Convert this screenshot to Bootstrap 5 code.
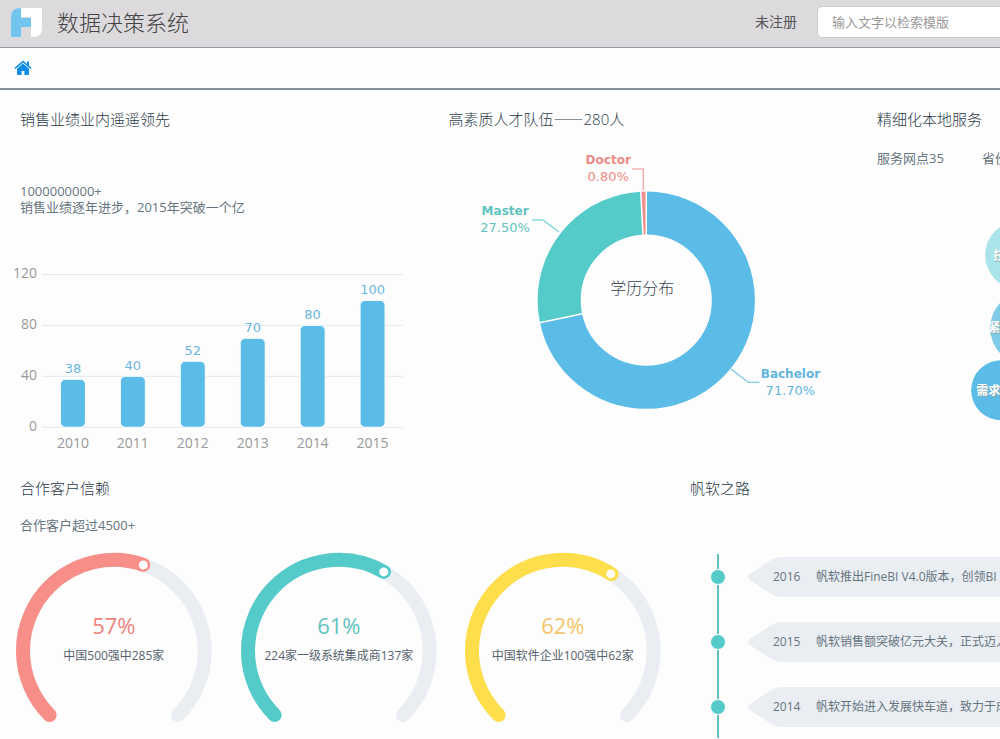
<!DOCTYPE html>
<html lang="zh-CN">
<head>
<meta charset="utf-8">
<meta name="viewport" content="width=device-width, initial-scale=1">
<title>数据决策系统</title>
<link href="https://cdn.jsdelivr.net/npm/bootstrap@5.3.0/dist/css/bootstrap.min.css" rel="stylesheet">
<style>
:root{--blue:#5bbce7;--teal:#55cbc9;--coral:#f78e87;--yellow:#fede4b;--track:#eaedf2;--ink:#3f4f5c;--soft:#66757f}
body{font-family:"Open Sans","Noto Sans CJK SC",sans-serif;background:#fdfdfd;color:var(--ink);overflow-x:hidden;font-size:13px;line-height:20px}
.topbar{height:48px;background:#dcdadd;border-bottom:1px solid #9b999d;overflow:hidden;padding-bottom:3px}
.brand-area{flex:0 0 75.5%;padding-left:10px;gap:14px}
.app-title{font-size:22px;line-height:30px;color:#444;font-weight:300}
.user-state{font-size:14px;color:#555}
.search-box{flex:0 0 220px;height:32px;margin-left:20px;font-size:13px;padding:0 14px;border-color:#cfcdd0;border-radius:5px}
.search-box::placeholder{color:#999}
.tabs-strip{height:42px;padding-left:14px;border-bottom:2px solid #858f97}
.board{overflow:hidden}
.row-top{display:grid;grid-template-columns:repeat(3,42.85%)}
.row-bottom{display:grid;grid-template-columns:67% 62%}
.panel-title{font-size:15px;line-height:22px;font-weight:300;color:#2c3b48;margin:0;padding:18px 0 0 20px}
.cjk-dash{font-family:"Noto Sans CJK SC",sans-serif}
.note{padding-left:20px;color:var(--soft)}
.sales-note{line-height:16px;margin-top:53px}
svg{display:block}
.axis{font-size:14px;fill:#999}
.val{font-family:"DejaVu Sans",sans-serif;font-size:13px}
.slice-name{font-family:"DejaVu Sans",sans-serif;font-size:12px;font-weight:700}
.gauges{display:grid;grid-template-columns:repeat(3,1fr);margin-right:-4px}
.pct{font-size:22px}
.caption-text{font-size:12px;fill:#55636e}
.services{gap:38px;margin-top:18px}
.bubble-text{font-size:12px;font-weight:700;fill:#fff;text-shadow:1px 1px 1px #8aa}
.timeline{position:relative;margin:55px 0 0 41px;padding:3px 0 11px;gap:25px}
.timeline::before{content:"";position:absolute;left:6px;top:0;bottom:0;width:2px;background:#62c0c2}
.stop{height:40px;font-size:12px;color:var(--soft);white-space:nowrap}
.dot{position:relative;width:16px;height:16px;margin-left:-1px;border-radius:50%;background:var(--teal);border:1px solid #fdfdfd;flex:none}
.tag-tip{width:36px;height:40px;margin-left:21px;flex:none}
.tag-body{height:40px;background:var(--track);flex:1 0 auto;margin-left:-1px}
.tag-body time{width:43px;margin-left:-9px}
</style>
</head>
<body>
<header class="topbar d-flex align-items-center">
  <div class="brand-area d-flex align-items-center">
    <svg width="33" height="32" viewBox="0 0 33 32" aria-hidden="true"><path fill="#fff" d="M11 2h21v20q0 9-9 9h-2V11H11z"/><path fill="#71c5ee" d="M11 2v10h10v9H11v10H1V11q0-9 10-9z"/></svg>
    <span class="app-title">数据决策系统</span>
  </div>
  <span class="user-state flex-shrink-0">未注册</span>
  <input class="form-control search-box" type="search" placeholder="输入文字以检索模版" aria-label="输入文字以检索模版">
</header>
<nav class="tabs-strip d-flex align-items-center">
  <a href="#" aria-label="首页"><svg width="18" height="16" viewBox="0 0 18 16"><path fill="#0d8be8" d="M9 3.500 3 8.700V14q0 1 1 1h3.600v-4h2.800v4H14q1 0 1-1V8.700z"/><path fill="#0d8be8" d="M9 .5.5 7.800l1 1.100L9 2.500l7.500 6.400 1-1.100-2.500-2.200V1.500h-2v2.400z"/></svg></a>
</nav>
<main class="board">
  <div class="row-top">
    <section>
      <h2 class="panel-title">销售业绩业内遥遥领先</h2>
      <div class="note sales-note">1000000000+<br>销售业绩逐年进步，2015年突破一个亿</div>
      <svg width="100%" viewBox="0 0 429 244" role="img" aria-label="年度销售业绩">
        <path d="M42 59.500H403M42 110.500H403M42 161.500H403M42 212.500H403" stroke="#e3e8ea"/>
        <g class="axis" text-anchor="end"><text x="37" y="63">120</text><text x="37" y="114">80</text><text x="37" y="165">40</text><text x="37" y="216">0</text></g>
        <g fill="#5bbce7" stroke="#fdfdfd"><rect x="60.500" y="164.500" width="25" height="48" rx="5"/><rect x="120.500" y="161.500" width="25" height="51" rx="5"/><rect x="180.500" y="146.500" width="25" height="66" rx="5"/><rect x="240.500" y="123.500" width="25" height="89" rx="5"/><rect x="300.500" y="110.500" width="25" height="102" rx="5"/><rect x="360.500" y="85.500" width="25" height="127" rx="5"/></g>
        <g class="val" text-anchor="middle" fill="#6cb6dc"><text x="73" y="158">38</text><text x="133" y="155">40</text><text x="193" y="140">52</text><text x="253" y="117">70</text><text x="313" y="104">80</text><text x="373" y="79">100</text></g>
        <g class="axis" text-anchor="middle"><text x="73" y="233">2010</text><text x="133" y="233">2011</text><text x="193" y="233">2012</text><text x="253" y="233">2013</text><text x="313" y="233">2014</text><text x="373" y="233">2015</text></g>
      </svg>
    </section>
    <section>
      <h2 class="panel-title">高素质人才队伍<span class="cjk-dash">——</span>280人</h2>
      <svg width="100%" viewBox="1 0 428 320" role="img" aria-label="学历分布">
        <g fill="none" stroke-width="43" transform="rotate(-90 218 170)">
          <circle cx="218" cy="170" r="87" stroke="#5bbce7" pathLength="1000" stroke-dasharray="717 283"/>
          <circle cx="218" cy="170" r="87" stroke="#55cbc9" pathLength="1000" stroke-dasharray="275 725" stroke-dashoffset="-717"/>
          <circle cx="218" cy="170" r="87" stroke="#f08e8c" pathLength="1000" stroke-dasharray="8 992" stroke-dashoffset="-992"/>
        </g>
        <g stroke="#fff" stroke-width="1.500"><path d="M218 60v46"/><path d="M218 60v46" transform="rotate(258.100 218 170)"/><path d="M218 60v46" transform="rotate(357.100 218 170)"/></g>
        <g fill="none"><path d="M204 39h11v21" stroke="#f08e8c"/><path d="M104 90h11l16 12" stroke="#55cbc9"/><path d="M303 239l17 13h11" stroke="#5bbce7"/></g>
        <g text-anchor="middle">
          <g fill="#ee8a83"><text class="slice-name" x="180" y="34">Doctor</text><text class="val" x="180" y="51">0.80%</text></g>
          <g fill="#5fc4c0"><text class="slice-name" x="77" y="85">Master</text><text class="val" x="77" y="102">27.50%</text></g>
          <g fill="#62b5df"><text class="slice-name" x="362" y="248">Bachelor</text><text class="val" x="362" y="265">71.70%</text></g>
          <text x="214" y="164" font-size="16" font-weight="300" fill="#36444f">学历分布</text>
        </g>
      </svg>
    </section>
    <section>
      <h2 class="panel-title">精细化本地服务</h2>
      <div class="note services d-flex"><span>服务网点35</span><span>省份</span></div>
      <svg width="100%" viewBox="0 0 428 290" role="img" aria-label="服务内容">
        <circle cx="162" cy="87" r="34" fill="#abe3ea"/><circle cx="170" cy="160" r="37" fill="#7fcbe8"/><circle cx="144" cy="222" r="30" fill="#5bbce7"/>
        <g class="bubble-text"><text x="136" y="92">技术支持</text><text x="131" y="164">紧急响应</text><text x="119" y="227">需求分析</text></g>
      </svg>
    </section>
  </div>
  <div class="row-bottom">
    <section>
      <h2 class="panel-title">合作客户信赖</h2>
      <div class="note mt-3">合作客户超过4500+</div>
      <div class="gauges">
        <svg width="100%" viewBox="0 0 225 200" role="img" aria-label="57%"><g fill="none" stroke-width="14" stroke-linecap="round"><path d="M49.700 180.300A91 91 0 1 1 178.300 180.300" stroke="#eaedf2"/><path d="M49.700 180.300A91 91 0 1 1 178.300 180.300" stroke="#f78e87" pathLength="100" stroke-dasharray="57 100"/></g><circle cx="143.500" cy="30" r="4.500" fill="#fff"/><g text-anchor="middle"><text class="pct" x="114" y="99" fill="#ee837c">57%</text><text class="caption-text" x="114" y="125">中国500强中285家</text></g></svg>
        <svg width="100%" viewBox="0 0 225 200" role="img" aria-label="61%"><g fill="none" stroke-width="14" stroke-linecap="round"><path d="M49.700 180.300A91 91 0 1 1 178.300 180.300" stroke="#eaedf2"/><path d="M49.700 180.300A91 91 0 1 1 178.300 180.300" stroke="#55cbc9" pathLength="100" stroke-dasharray="61 100"/></g><circle cx="159" cy="37" r="4.500" fill="#fff"/><g text-anchor="middle"><text class="pct" x="114" y="99" fill="#60c4bf">61%</text><text class="caption-text" x="114" y="125">224家一级系统集成商137家</text></g></svg>
        <svg width="100%" viewBox="0 0 225 200" role="img" aria-label="62%"><g fill="none" stroke-width="14" stroke-linecap="round"><path d="M49.700 180.300A91 91 0 1 1 178.300 180.300" stroke="#eaedf2"/><path d="M49.700 180.300A91 91 0 1 1 178.300 180.300" stroke="#fede4b" pathLength="100" stroke-dasharray="62 100"/></g><circle cx="162" cy="39" r="4.500" fill="#fff"/><g text-anchor="middle"><text class="pct" x="114" y="99" fill="#f4c56b">62%</text><text class="caption-text" x="114" y="125">中国软件企业100强中62家</text></g></svg>
      </div>
    </section>
    <section>
      <h2 class="panel-title">帆软之路</h2>
      <ol class="timeline list-unstyled d-flex flex-column">
        <li class="stop d-flex align-items-center"><span class="dot"></span><svg class="tag-tip" viewBox="0 0 36 40"><path fill="#eaedf2" d="M36 0Q28 0 21 5L3 17Q-2 20 3 23L21 35Q28 40 36 40z"/></svg><div class="tag-body d-flex align-items-center"><time>2016</time><span>帆软推出FineBI V4.0版本，创领BI</span></div></li>
        <li class="stop d-flex align-items-center"><span class="dot"></span><svg class="tag-tip" viewBox="0 0 36 40"><path fill="#eaedf2" d="M36 0Q28 0 21 5L3 17Q-2 20 3 23L21 35Q28 40 36 40z"/></svg><div class="tag-body d-flex align-items-center"><time>2015</time><span>帆软销售额突破亿元大关，正式迈入</span></div></li>
        <li class="stop d-flex align-items-center"><span class="dot"></span><svg class="tag-tip" viewBox="0 0 36 40"><path fill="#eaedf2" d="M36 0Q28 0 21 5L3 17Q-2 20 3 23L21 35Q28 40 36 40z"/></svg><div class="tag-body d-flex align-items-center"><time>2014</time><span>帆软开始进入发展快车道，致力于成</span></div></li>
      </ol>
    </section>
  </div>
</main>
<script src="https://cdn.jsdelivr.net/npm/bootstrap@5.3.0/dist/js/bootstrap.bundle.min.js"></script>
</body>
</html>
